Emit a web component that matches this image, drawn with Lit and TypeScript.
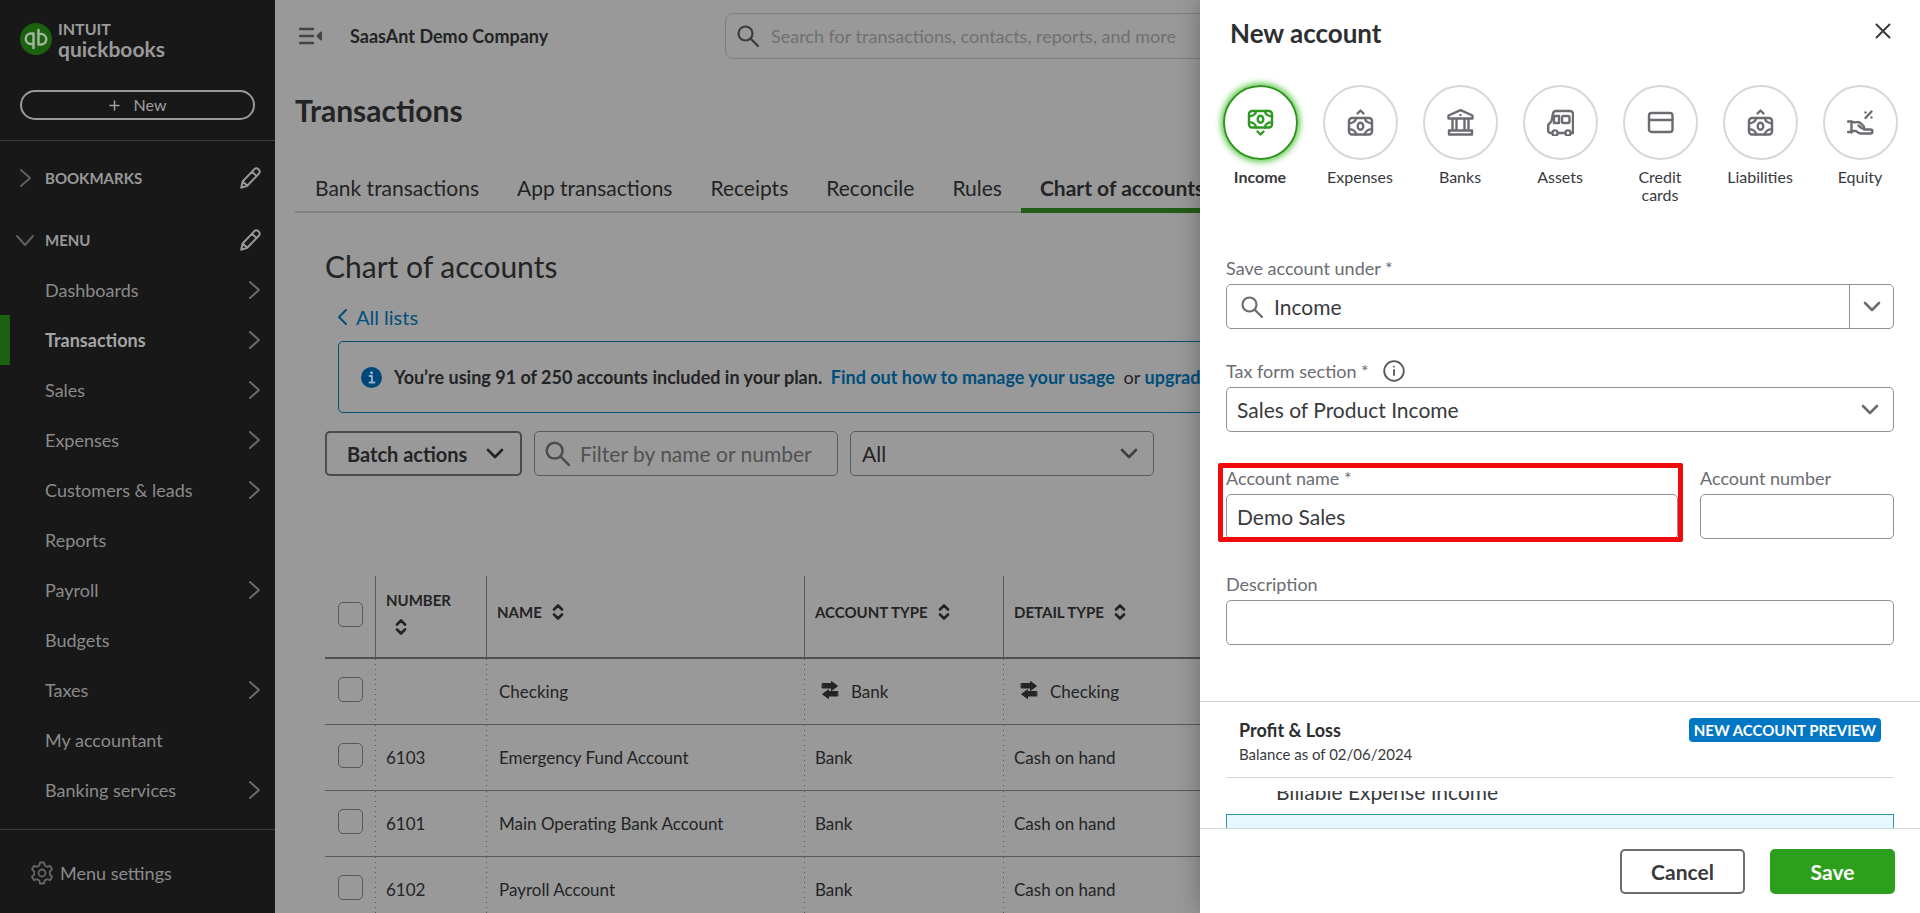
import { LitElement, html, svg, css, nothing } from "lit";
import { customElement } from "lit/decorators.js";
import { classMap } from "lit/directives/class-map.js";

const base = css`
  *, *::before, *::after { box-sizing: border-box; }
  svg { display: block; flex: none; fill: none; stroke: currentColor; stroke-linecap: round; stroke-linejoin: round; }
  button, input, select { font: inherit; color: inherit; margin: 0; background: none; border: 0; padding: 0; outline: 0; }
  button { cursor: pointer; }
  a { color: inherit; text-decoration: none; }
  h1, h2, h3, p, ul { margin: 0; padding: 0; font-size: inherit; font-weight: 400; }
  ul { list-style: none; }
`;

const chevronRight = html`<svg width="11" height="18" viewBox="0 0 11 18" stroke-width="2"><path d="M1 1l9 8-9 8" /></svg>`;
const chevronLeft = html`<svg width="9" height="16" viewBox="0 0 9 16" stroke-width="2"><path d="M8 1L1 8l7 7" /></svg>`;
const chevronDown = html`<svg width="18" height="11" viewBox="0 0 18 11" stroke-width="2.6"><path d="M2 2l7 7 7-7" /></svg>`;
const thinChevronDown = html`<svg width="18" height="11" viewBox="0 0 18 11" stroke-width="2"><path d="M1 1l8 9 8-9" /></svg>`;
const magnifier = (size: number) => html`<svg width=${size} height=${size} viewBox="0 0 22 22" stroke-width="2.2"><circle cx="8.5" cy="8.5" r="7" /><path d="M13.6 13.6L21 21" /></svg>`;
const pencil = html`<svg width="21" height="22" viewBox="0 0 21 22" stroke-width="2"><path d="M1.2 20.8l1.4-6.3L14.4 2.1a2.6 2.6 0 0 1 3.7-.1l.8.8a2.6 2.6 0 0 1 .1 3.7L7.3 18.8z M12 4.7l4.6 4.4 M2.6 14.5l4.7 4.3" /></svg>`;
const sortIcon = html`<svg class="sort" width="12" height="16" viewBox="0 0 12 16" stroke-width="2.6"><path d="M2 5.500l4-4 4 4 M2 10.500l4 4 4-4" /></svg>`;
const transferIcon = html`<svg width="18" height="22" viewBox="0 0 18 22"><path fill="currentColor" stroke-width="1" d="M1.500 2.500H10.500V.5L16.500 5l-6 4.500V7H1.500z M16.500 10.500H7.500V8.800L1.500 13.200l6 4.300V15H16.500z" /></svg>`;

const note = (dy: number) => svg`
  <rect x="2" y=${3 + dy} width="23" height="16.500" rx="3" />
  <path d=${`M9 ${3 + dy}a6 5 0 0 1-7 5 M18 ${3 + dy}a6 5 0 0 0 7 5 M9 ${19.5 + dy}a6 5 0 0 0-7-5 M18 ${19.5 + dy}a6 5 0 0 1 7-5`} />
  <ellipse cx="13.500" cy=${11.25 + dy} rx="2.800" ry="3.500" />`;
const typeIcon = (body: unknown) => html`<svg width="27" height="27" viewBox="0 0 27 27" stroke-width="2.4">${body}</svg>`;
const moneyOut = svg`${note(6)}<path d="M10.500 4.500l3-3 3 3" />`;
const moneyIn = svg`${note(-1)}<path d="M10.500 22.500l3 3 3-3" />`;

const ACCOUNT_TYPES = [
  { label: "Income", icon: moneyIn, active: true },
  { label: "Expenses", icon: moneyOut },
  { label: "Banks", icon: svg`<path d="M1.500 9.500V6.500L13.500 1.200l12 5.300v3z M2 21.500h23v4H2z M5.500 9.500v12 M9.500 9.500v12 M17.500 9.500v12 M21.500 9.500v12" /><path d="M13.500 6h.01" />` },
  { label: "Assets", icon: svg`<path d="M5 24H3.500A2.500 2.500 0 0 1 1.200 21.500V16l3.300-4L6 4.500A3 3 0 0 1 9 2h14a3 3 0 0 1 3 3v19h-2 M11 24h7" /><rect x="7" y="7" width="5" height="7" /><rect x="15" y="7" width="7.500" height="7" rx="1.500" /><circle cx="8" cy="24" r="2.600" /><circle cx="21" cy="24" r="2.600" />` },
  { label: "Credit cards", icon: svg`<rect x="2" y="4" width="23.500" height="19" rx="2.500" /><path d="M2 11h23.500" />` },
  { label: "Liabilities", icon: moneyOut },
  { label: "Equity", icon: svg`<path d="M1 12.500h3c2 0 2 1.500 6 .6 2-.4 3 .4 4 1.400l2.500 2.500c1.500 1.500-.5 3-2 2l-3-2.500 M17 20.500h6.500c2.500 0 2.500 4 0 4H14c-2 0-3.500-1-5-2.500H4 M4.500 12.500v11 M1 23h3.500" /><path d="M18.500 9l6-6.500 M18.500 3.500h.01 M24.500 8.500h.01" />` },
];

const MENU = [
  ["Dashboards", true], ["Transactions", true], ["Sales", true], ["Expenses", true],
  ["Customers & leads", true], ["Reports", false], ["Payroll", true], ["Budgets", false],
  ["Taxes", true], ["My accountant", false], ["Banking services", true],
] as const;

const TABS = ["Bank transactions", "App transactions", "Receipts", "Reconcile", "Rules", "Chart of accounts"];

const ROWS = [
  { number: "", name: "Checking", type: "Bank", detail: "Checking", linked: true },
  { number: "6103", name: "Emergency Fund Account", type: "Bank", detail: "Cash on hand", linked: false },
  { number: "6101", name: "Main Operating Bank Account", type: "Bank", detail: "Cash on hand", linked: false },
  { number: "6102", name: "Payroll Account", type: "Bank", detail: "Cash on hand", linked: false },
];

@customElement("side-menu")
class SideMenu extends LitElement {
  static styles = [base, css`
    :host { display: flex; flex-direction: column; background: #181818; color: #8b8b8b; font-size: 18px; line-height: 24px; }
    :host > * { flex: none; }
    .top { padding: 21px 20px 20px; border-bottom: 1px solid #3e3e3e; }
    .brand { display: flex; align-items: flex-start; gap: 6px; color: #9a9a9a; }
    .brand svg { margin-top: 2px; }
    .words { display: flex; flex-direction: column; font-weight: 700; }
    .intuit { font-size: 16px; line-height: 16px; }
    .qb { font-size: 21px; line-height: 24px; }
    .new { display: flex; align-items: center; justify-content: center; gap: 14px; width: 100%; height: 30px; margin-top: 29px; border: 2px solid #999; border-radius: 15px; color: #a0a0a0; font-size: 16px; }
    .section { display: flex; align-items: center; height: 50px; margin-top: 12px; padding: 0 14px 0 16px; color: #989898; font-size: 15px; }
    .section button { display: flex; }
    .mark { width: 29px; color: #5f5f5f; }
    .mark.narrow { padding-left: 4px; }
    .section h2 { flex: 1; font-weight: 700; }
    .item { display: flex; align-items: center; justify-content: space-between; height: 50px; padding: 0 15px 0 35px; border-left: 10px solid transparent; }
    .item svg { color: #6b6b6b; }
    .item.active { border-color: #1a6010; color: #a5a5a5; font-weight: 700; }
    .settings { display: flex; align-items: center; gap: 7px; margin-top: 14px; padding: 31px 31px 16px; border-top: 1px solid #3e3e3e; }
    .settings svg { color: #666; }
  `];

  render() {
    return html`
      <div class="top">
        <a class="brand" href="#">
          <svg width="32" height="32" viewBox="0 0 32 32" stroke="#a6b8a3" stroke-width="2.500">
            <circle cx="16" cy="16" r="16" fill="#1b620f" stroke="none" />
            <path stroke="#a3b5a0" d="M13.500 10.500H11a5 5 0 0 0 0 10.500h.5 M13.500 10.500v14.500 M18.500 21.500H21a5 5 0 0 0 0-10.500h-.5 M18.500 21.500V7" />
          </svg>
          <span class="words"><span class="intuit">INTUIT</span><span class="qb">quickbooks</span></span>
        </a>
        <button class="new"><svg width="11" height="11" viewBox="0 0 11 11" stroke-width="1.500"><path d="M5.500 1v9 M1 5.500h9" /></svg>New</button>
      </div>
      <div class="section"><span class="mark narrow">${chevronRight}</span><h2>BOOKMARKS</h2><button aria-label="Edit bookmarks">${pencil}</button></div>
      <div class="section"><span class="mark">${thinChevronDown}</span><h2>MENU</h2><button aria-label="Edit menu">${pencil}</button></div>
      <ul>
        ${MENU.map(([label, more]) => html`<li><a href="#" class=${classMap({ item: true, active: label === "Transactions" })}>${label}${more ? chevronRight : nothing}</a></li>`)}
      </ul>
      <a class="settings" href="#">
        <svg width="22" height="24" viewBox="0 0 22 24" stroke-width="1.800"><path d="M9 1.500h4l.7 3 2.300 1.300 3-1 2 3.500-2.200 2.200v3l2.200 2.200-2 3.500-3-1-2.300 1.300-.7 3H9l-.7-3L6 18.200l-3 1-2-3.500 2.200-2.200v-3L1 8.300l2-3.500 3 1 2.300-1.300z" /><circle cx="11" cy="12" r="3.500" /></svg>
        Menu settings
      </a>`;
  }
}

@customElement("accounts-page")
class AccountsPage extends LitElement {
  static styles = [base, css`
    :host { display: block; min-width: 0; overflow: hidden; background: #999; color: #232425; font-size: 18px; line-height: 24px; }
    header { display: flex; align-items: center; height: 71px; padding: 0 24px; }
    .toggle { display: flex; margin-right: 28px; color: #454545; }
    .company { flex: 0 0 375px; font-weight: 700; }
    .search { display: flex; align-items: center; gap: 12px; flex: 1; height: 46px; padding: 0 11px; border: 1px solid #7f7f7f; border-radius: 8px; color: #3d3e3f; }
    .search input { flex: 1; min-width: 0; }
    input::placeholder { color: #707070; opacity: 1; }
    .title { padding: 19px 20px 0; font-size: 30px; line-height: 40px; font-weight: 700; }
    .tabs { display: flex; height: 60px; margin: 23px 20px 0; padding-left: 1px; border-bottom: 2px solid #828282; font-size: 21px; white-space: nowrap; }
    .tab { padding: 23px 19px 0; height: 60px; }
    .tab.active { border-bottom: 5px solid #225d18; border-radius: 4px 4px 0 0; font-weight: 700; }
    .content { padding: 33px 50px 0; }
    .heading { font-size: 30px; line-height: 40px; }
    .back { display: inline-flex; align-items: center; gap: 9px; margin: 19px 0 12px 13px; color: #00507e; font-size: 20px; }
    .notice { display: flex; align-items: center; gap: 12px; height: 72px; margin: 0 0 18px 13px; padding: 0 22px; border: 1px solid #005076; border-radius: 5px; white-space: nowrap; }
    .notice a { color: #004e7c; font-weight: 700; }
    .notice .manage { margin: 0 4px; }
    .usage { font-weight: 700; }
    .filters { display: flex; gap: 12px; font-size: 21px; }
    .batch { display: flex; align-items: center; justify-content: space-between; width: 197px; height: 45px; padding: 0 16px 0 20px; border: 2px solid #4b4c4d; border-radius: 5px; font-size: 20px; font-weight: 700; }
    .filter, .pick { height: 45px; border: 1px solid #5a5b5c; border-radius: 5px; }
    .filter { display: flex; align-items: center; gap: 10px; width: 304px; padding: 0 10px; color: #4a4b4c; }
    .filter input { flex: 1; min-width: 0; }
    .filter input::placeholder { color: #505152; }
    .pick { display: grid; align-items: center; width: 304px; }
    .pick select, .pick svg { grid-area: 1 / 1; }
    .pick select { appearance: none; height: 100%; padding: 0 11px; }
    .pick svg { justify-self: end; margin-right: 15px; color: #3f4041; pointer-events: none; }
    table { width: 100%; margin-top: 100px; border-spacing: 0; table-layout: fixed; font-size: 17px; }
    .c-check { width: 51px; } .c-num { width: 111px; } .c-name { width: 318px; } .c-type { width: 199px; }
    th { height: 83px; padding: 0 10px 10px; border-bottom: 2px solid #4f5050; border-right: 1px solid #585959; text-align: left; font-size: 15px; font-weight: 700; }
    td { height: 66px; padding: 0 10px; border-bottom: 1px solid #5a5a5a; background: linear-gradient(#555 1px, transparent 1px) right top / 1px 5px repeat-y; }
    th:last-child { border-right: 0; }
    td:last-child { background: none; }
    .name { padding-left: 12px; }
    .head { display: flex; align-items: center; gap: 10px; }
    .head.wrapped { flex-direction: column; align-items: flex-start; gap: 7px; }
    .wrapped .sort { margin-left: 9px; }
    .cell { display: flex; align-items: center; gap: 12px; }
    .cell.linked { padding-left: 6px; }
    .tick { padding: 0 0 4px 13px; }
    .tick input { display: block; appearance: none; width: 25px; height: 25px; border: 1px solid #55595c; border-radius: 5px; }
  `];

  render() {
    return html`
      <header>
        <button class="toggle" aria-label="Collapse menu"><svg width="23" height="18" viewBox="0 0 23 18" stroke-width="2.400"><path d="M1 2h13 M1 9h13 M1 16h13" /><path d="M22 5.500v7l-3.500-3.500z" fill="currentColor" stroke-width="2" /></svg></button>
        <span class="company">SaasAnt Demo Company</span>
        <label class="search">${magnifier(22)}<input type="search" aria-label="Search" placeholder="Search for transactions, contacts, reports, and more" /></label>
      </header>
      <h1 class="title">Transactions</h1>
      <nav class="tabs">
        ${TABS.map((t) => html`<a href="#" class=${classMap({ tab: true, active: t === "Chart of accounts" })}>${t}</a>`)}
      </nav>
      <section class="content">
        <h2 class="heading">Chart of accounts</h2>
        <a class="back" href="#">${chevronLeft}All lists</a>
        <div class="notice">
          <svg width="21" height="21" viewBox="0 0 21 21"><circle cx="10.500" cy="10.500" r="10.500" fill="#00487a" stroke="none" /><path d="M8.500 9h2.500v6 M8.500 15.500h5" stroke="#9ab4c4" stroke-width="1.800" /><circle cx="10.500" cy="5.800" r="1.500" fill="#9ab4c4" stroke="none" /></svg>
          <p><span class="usage">You’re using 91 of 250 accounts included in your plan.</span> <a class="manage" href="#">Find out how to manage your usage</a> or <a href="#">upgrade</a></p>
        </div>
        <div class="filters">
          <button class="batch">Batch actions${chevronDown}</button>
          <label class="filter">${magnifier(25)}<input aria-label="Filter" placeholder="Filter by name or number" /></label>
          <div class="pick"><select aria-label="Account filter"><option>All</option></select>${chevronDown}</div>
        </div>
        <table>
          <colgroup><col class="c-check" /><col class="c-num" /><col class="c-name" /><col class="c-type" /><col /></colgroup>
          <thead>
            <tr>
              <th class="tick"><input type="checkbox" aria-label="Select all" /></th>
              <th><span class="head wrapped">NUMBER ${sortIcon}</span></th>
              <th><span class="head">NAME ${sortIcon}</span></th>
              <th><span class="head">ACCOUNT TYPE ${sortIcon}</span></th>
              <th><span class="head">DETAIL TYPE ${sortIcon}</span></th>
            </tr>
          </thead>
          <tbody>
            ${ROWS.map((r) => html`<tr>
              <td class="tick"><input type="checkbox" aria-label=${`Select ${r.name}`} /></td>
              <td>${r.number}</td>
              <td class="name">${r.name}</td>
              <td><span class=${classMap({ cell: true, linked: r.linked })}>${r.linked ? transferIcon : nothing}${r.type}</span></td>
              <td><span class=${classMap({ cell: true, linked: r.linked })}>${r.linked ? transferIcon : nothing}${r.detail}</span></td>
            </tr>`)}
          </tbody>
        </table>
      </section>`;
  }
}

@customElement("account-drawer")
class AccountDrawer extends LitElement {
  static styles = [base, css`
    :host { display: flex; flex-direction: column; background: #fff; color: #393a3d; box-shadow: 0 0 24px rgba(0, 0, 0, 0.3); }
    header { display: flex; align-items: center; justify-content: space-between; padding: 16px 29px 0 30px; }
    h2 { font-size: 26px; line-height: 34px; font-weight: 700; color: #2d2e30; }
    .close { display: flex; padding-bottom: 4px; }
    .types { display: flex; justify-content: space-between; padding: 35px 10px 0; }
    .type { display: flex; flex-direction: column; align-items: center; gap: 8px; width: 100px; font-size: 16px; line-height: 18px; }
    .ring { display: flex; align-items: center; justify-content: center; width: 75px; height: 75px; border: 2px solid #d4d7dc; border-radius: 50%; color: #6b6c72; }
    .type.active { font-weight: 700; }
    .active .ring { border-color: #2c961c; color: #2c9a20; box-shadow: 0 0 6px 2px #5cc84a; }
    .label { width: 60px; }
    form { display: grid; grid-template-columns: 452fr 194fr; column-gap: 22px; flex: 1; align-content: start; padding: 52px 26px 0; }
    .field { display: flex; flex-direction: column; gap: 4px; }
    .wide { grid-column: 1 / -1; }
    .field label, .caption { font-size: 18px; line-height: 24px; color: #6b6c72; }
    .caption { display: flex; align-items: center; gap: 14px; }
    .caption svg { color: #55565a; }
    .box { width: 100%; height: 45px; padding: 0 10px; border: 1px solid #8d9096; border-radius: 5px; font-size: 21px; }
    .f2 { margin-top: 30px; }
    .f3 { margin-top: 34px; }
    .f4 { margin-top: 33px; }
    .combo { display: flex; align-items: center; padding: 0 0 0 14px; }
    .combo svg { color: #6b6c72; }
    .combo input { flex: 1; min-width: 0; padding: 0 11px; }
    .combo button { display: flex; align-items: center; justify-content: center; width: 44px; height: 100%; border-left: 1px solid #8d9096; }
    .pick { display: grid; align-items: center; }
    .pick select, .pick svg { grid-area: 1 / 1; }
    .pick select { appearance: none; }
    .pick svg { justify-self: end; margin-right: 15px; color: #6b6c72; pointer-events: none; }
    .marked { position: relative; }
    .marked::after { content: ""; position: absolute; inset: -3px -5px -3px -8px; border: 5px solid #f00a0a; border-radius: 2px; pointer-events: none; }
    .preview { padding: 0 26px; border-top: 1px solid #cfd1d5; }
    .summary { display: flex; justify-content: space-between; align-items: flex-start; padding: 16px 13px 10px; border-bottom: 1px solid #d4d7dc; }
    h3 { font-size: 18px; line-height: 24px; font-weight: 700; color: #2d2e30; }
    .date { font-size: 15px; line-height: 25px; }
    .badge { padding: 0 5px; border-radius: 4px; background: #0077c5; color: #fff; font-size: 15px; line-height: 24px; font-weight: 700; }
    .scroll { display: flex; flex-direction: column; justify-content: flex-end; height: 37px; margin-top: 13px; overflow: hidden; }
    .line { padding-left: 50px; font-size: 21px; line-height: 24px; margin-bottom: 10px; }
    .mine { flex: none; height: 14px; border: 1px solid #2c95a8; border-bottom: 0; background: #e6f7ff; }
    footer { display: flex; justify-content: flex-end; gap: 25px; padding: 20px 25px 19px; border-top: 1px solid #d4d7dc; }
    footer button { width: 125px; height: 45px; border: 2px solid #6b6c72; border-radius: 5px; font-size: 21px; font-weight: 700; }
    footer .save { border-color: #2ca01c; background: #2ca01c; color: #fff; }
  `];

  render() {
    return html`
      <header>
        <h2>New account</h2>
        <button class="close" aria-label="Close"><svg width="16" height="16" viewBox="0 0 16 16" stroke-width="2"><path d="M1.500 1.500l13 13 M14.500 1.500l-13 13" /></svg></button>
      </header>
      <div class="types">
        ${ACCOUNT_TYPES.map((t) => html`<button class=${classMap({ type: true, active: !!t.active })}><span class="ring">${typeIcon(t.icon)}</span><span class=${t.label === "Credit cards" ? "label" : ""}>${t.label}</span></button>`)}
      </div>
      <form>
        <div class="field wide">
          <label for="under">Save account under *</label>
          <div class="box combo">${magnifier(22)}<input id="under" value="Income" /><button type="button" aria-label="Show options">${chevronDown}</button></div>
        </div>
        <div class="field wide f2">
          <div class="caption"><label for="tax">Tax form section *</label><svg width="22" height="22" viewBox="0 0 22 22" stroke-width="1.800"><circle cx="11" cy="11" r="9.800" /><path d="M11 10v5 M11 6.700h.01" /></svg></div>
          <div class="pick"><select id="tax" class="box"><option>Sales of Product Income</option></select>${chevronDown}</div>
        </div>
        <div class="field f3 marked"><label for="name">Account name *</label><input id="name" class="box" value="Demo Sales" /></div>
        <div class="field f3"><label for="number">Account number</label><input id="number" class="box" /></div>
        <div class="field wide f4"><label for="desc">Description</label><input id="desc" class="box" /></div>
      </form>
      <section class="preview">
        <div class="summary">
          <div><h3>Profit &amp; Loss</h3><p class="date">Balance as of 02/06/2024</p></div>
          <span class="badge">NEW ACCOUNT PREVIEW</span>
        </div>
        <div class="scroll"><p class="line">Billable Expense Income</p><div class="mine"></div></div>
      </section>
      <footer><button>Cancel</button><button class="save">Save</button></footer>`;
  }
}

@customElement("app-root")
class AppRoot extends LitElement {
  static styles = [base, css`
    :host { display: grid; grid-template-columns: 275px 1fr; height: 100vh; overflow: hidden; position: relative; font-family: Lato, "Open Sans", sans-serif; }
    side-menu, accounts-page { min-height: 0; }
    account-drawer { position: absolute; top: 0; right: 0; bottom: 0; width: 37.500%; }
  `];

  render() {
    return html`<side-menu></side-menu><accounts-page></accounts-page><account-drawer></account-drawer>`;
  }
}
